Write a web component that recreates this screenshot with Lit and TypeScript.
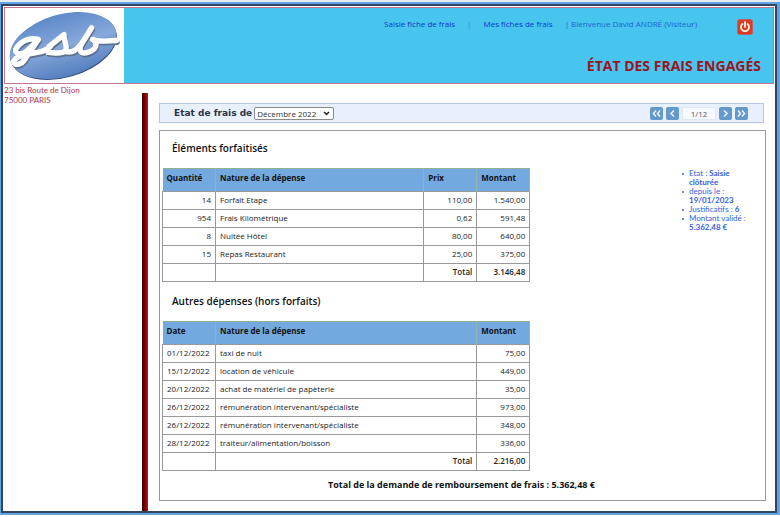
import { LitElement, html, css, svg } from "lit";
import { customElement, property, state } from "lit/decorators.js";

type Forfait = [string, string, string, string];
type HorsForfait = [string, string, string];

const FORFAITS: Forfait[] = [
  ["14", "Forfait Etape", "110,00", "1.540,00"],
  ["954", "Frais Kilométrique", "0,62", "591,48"],
  ["8", "Nuitée Hôtel", "80,00", "640,00"],
  ["15", "Repas Restaurant", "25,00", "375,00"],
];

const HORS_FORFAITS: HorsForfait[] = [
  ["01/12/2022", "taxi de nuit", "75,00"],
  ["15/12/2022", "location de véhicule", "449,00"],
  ["20/12/2022", "achat de matériel de papèterie", "35,00"],
  ["26/12/2022", "rémunération intervenant/spécialiste", "973,00"],
  ["26/12/2022", "rémunération intervenant/spécialiste", "348,00"],
  ["28/12/2022", "traiteur/alimentation/boisson", "336,00"],
];

@customElement("gsb-logo")
export class GsbLogo extends LitElement {
  static styles = css`
    :host { display: block; }
    .logo { display: block; width: 100%; height: 100%; }
  `;

  render() {
    const strokes = svg`
      <path d="M33 32 C24 29 14 34 10 42 C9 47 16 48 21 44 L33 32 L20 51 C16 58 8 59 8 54 C11 47 24 47 32 45 C38 44 42 42 45 39" />
      <path d="M44 39 L59 27 C58 33 64 39 60 44 C56 47 48 45 43 45 M60 44 C68 46 72 42 76 37" />
      <path d="M87 20 L77 36 C73 43 76 47 83 45 C92 42 94 36 88 32 C95 35 103 33 112 33" />
    `;
    return html`
      <svg class="logo" viewBox="0 0 119 76" role="img" aria-label="gsb">
        <defs>
          <linearGradient id="disc" x1="0" y1="0" x2="0" y2="1">
            <stop offset="0" stop-color="#5f8aca" />
            <stop offset="0.5" stop-color="#86a8da" />
            <stop offset="1" stop-color="#547fc0" />
          </linearGradient>
        </defs>
        <ellipse cx="58.5" cy="39" rx="55.5" ry="31.5" transform="rotate(-16 58.5 39)" fill="#314b78" />
        <ellipse cx="58" cy="38" rx="55.5" ry="31.5" transform="rotate(-16 58 38)" fill="url(#disc)" />
        <g fill="none" stroke="#5d718f" stroke-width="5" stroke-linecap="round" stroke-linejoin="round" transform="translate(1 2)">${strokes}</g>
        <g fill="none" stroke="#fff" stroke-width="5.5" stroke-linecap="round" stroke-linejoin="round">${strokes}</g>
      </svg>
    `;
  }
}

@customElement("pager-button")
export class PagerButton extends LitElement {
  @property() label = "";
  @property() kind = "next";

  static styles = css`
    .button {
      display: block;
      width: 13px;
      height: 13px;
      padding: 0;
      border: 0;
      border-radius: 2px;
      background: #6399cb;
      cursor: pointer;
    }
    .icon { display: block; width: 13px; height: 13px; }
  `;

  render() {
    const paths: Record<string, string> = {
      first: "M6 3.5 L3.5 6.5 L6 9.5 M10 3.5 L7.5 6.5 L10 9.5",
      previous: "M8 3.5 L5 6.5 L8 9.5",
      next: "M5 3.5 L8 6.5 L5 9.5",
      last: "M3 3.5 L5.5 6.5 L3 9.5 M7 3.5 L9.5 6.5 L7 9.5",
    };
    return html`
      <button class="button" type="button" aria-label=${this.label}>
        <svg class="icon" viewBox="0 0 13 13" aria-hidden="true">
          <path d=${paths[this.kind]} fill="none" stroke="#eef6ff" stroke-width="1.5" />
        </svg>
      </button>
    `;
  }
}

@customElement("app-root")
export class AppRoot extends LitElement {
  @state() private month = "Décembre 2022";

  static styles = css`
    :host {
      display: block;
      box-sizing: border-box;
      padding-top: 2px;
      background: #e9ecef;
      color: #111;
      font-family: "Open Sans", "Liberation Sans", sans-serif;
      font-size: 8px;
      line-height: 10px;
    }
    *, *::before, *::after { box-sizing: border-box; }
    .backdrop { padding: 2px 3px 2px 1px; background: #62a4e2; }
    .page {
      border: 2px solid #2f4468;
      border-bottom-color: #34475c;
      background: #fff;
      padding: 1px 1px 0;
    }
    .header {
      display: flex;
      height: 77px;
      border: 1px solid #c4788f;
      background: #48c5ee;
    }
    .brand { flex: none; width: 119px; background: #fff; }
    .banner {
      flex: 1;
      display: flex;
      flex-direction: column;
      align-items: flex-end;
      justify-content: space-between;
      padding: 11px 12px 7px;
    }
    .menu { display: flex; align-items: flex-start; gap: 12px; color: #1a5fd6; padding-right: 8px; }
    .link { color: #0a37d0; text-decoration: none; }
    .separator { color: #3d83c8; }
    .welcome { margin-right: 28px; color: #1c64cf; }
    .logout { display: block; width: 16px; height: 16px; padding: 0; border: 0; background: none; cursor: pointer; }
    .power { display: block; width: 16px; height: 16px; }
    .title { margin: 0; color: #9c1422; font-size: 14px; line-height: 20px; font-weight: 700; }
    .body { display: flex; }
    .side { flex: none; width: 138px; padding-top: 1px; }
    .address { margin: 0; color: #b83244; font-family: Lato, sans-serif; font-style: normal; line-height: 10px; }
    .bar {
      flex: none;
      width: 6px;
      margin-top: 9px;
      background: linear-gradient(to right, #3d0000, #7a0000 50%, #c01818);
    }
    .main { flex: 1; min-width: 0; padding: 19px 8px 10px 11px; }
    .toolbar {
      display: flex;
      align-items: center;
      justify-content: space-between;
      height: 20px;
      margin-right: 2px;
      padding: 0 15px 0 14px;
      border: 1px solid #b4c6e8;
      background: #e8f0fd;
    }
    .period { display: flex; align-items: center; gap: 2px; color: #2a3346; }
    .period-label { font-family: "DejaVu Sans", sans-serif; font-size: 9px; font-weight: 700; }
    .picker { position: relative; }
    .month {
      appearance: none;
      display: block;
      width: 80px;
      height: 13px;
      padding: 0 2px;
      border: 1px solid #8a8a8a;
      border-radius: 2px;
      background: #fff;
      color: #333;
      font: inherit;
      line-height: 11px;
    }
    .arrow { position: absolute; right: 4px; top: 4px; width: 7px; height: 5px; pointer-events: none; }
    .pager { display: flex; align-items: center; gap: 3px; }
    .position { width: 34px; height: 13px; border: 1px solid #dfe8f5; background: #f6faff; color: #555; line-height: 11px; text-align: center; }
    .sheet {
      display: flex;
      flex-wrap: wrap;
      justify-content: space-between;
      margin-top: 7px;
      padding: 10px 9px 8px 2px;
      border: 1px solid #999;
    }
    .tables { width: 62%; }
    .subtitle { margin: 0; padding-left: 10px; font-size: 10px; line-height: 14px; font-weight: 600; }
    .table {
      width: 100%;
      margin: 13px 0 12px;
      border-collapse: collapse;
      table-layout: fixed;
    }
    .table.last { margin-bottom: 0; }
    .narrow { width: 53px; }
    .table th { height: 23px; padding: 0 4px 4px; background: #74a9df; text-align: left; font-weight: 700; border-top: 1px solid #8eb18f; border-right: 1px solid #8fb5b0; }
    .table td { height: 18px; padding: 0 4px 2px; border: 1px solid #999; white-space: nowrap; color: #222; }
    .table .amount { text-align: right; }
    .table .sum { text-align: right; font-weight: 600; }
    .status {
      width: 67px;
      margin: 28px 0 0;
      padding: 0;
      list-style: none;
      color: #2f62e8;
      font-family: Lato, sans-serif;
      line-height: 9px;
    }
    .fact { position: relative; }
    .fact::before {
      content: "";
      position: absolute;
      left: -7px;
      top: 4px;
      width: 2px;
      height: 2px;
      border-radius: 50%;
      background: #2f62e8;
    }
    .grand { flex: 1 0 100%; margin: 7px 0 0; padding-left: 5px; text-align: center; font-size: 9px; line-height: 14px; font-weight: 700; }
    .footer { height: 4px; background: #fff; }
  `;

  private changeMonth(event: Event) {
    this.month = (event.target as HTMLSelectElement).value;
  }

  render() {
    return html`
      <div class="backdrop">
        <div class="page">
          <header class="header">
            <gsb-logo class="brand"></gsb-logo>
            <div class="banner">
              <nav class="menu">
                <a class="link" href="#saisie">Saisie fiche de frais</a>
                <span class="separator">|</span>
                <a class="link" href="#fiches">Mes fiches de frais</a>
                <span class="welcome">| Bienvenue David ANDRÉ (Visiteur)</span>
                <button class="logout" type="button" aria-label="Déconnexion">
                  <svg class="power" viewBox="0 0 16 16" aria-hidden="true">
                    <rect width="16" height="16" rx="3" fill="#b8606a" />
                    <rect x="1" y="1" width="14" height="14" rx="2" fill="#dc3a22" />
                    <path d="M5.5 5 A4 4 0 1 0 10.5 5 M8 3 V8" fill="none" stroke="#fff0e6" stroke-width="1.8" stroke-linecap="round" />
                  </svg>
                </button>
              </nav>
              <h1 class="title">ÉTAT DES FRAIS ENGAGÉS</h1>
            </div>
          </header>
          <div class="body">
            <div class="side">
              <address class="address">23 bis Route de Dijon<br />75000 PARIS</address>
            </div>
            <div class="bar"></div>
            <main class="main">
              <div class="toolbar">
                <div class="period">
                  <label class="period-label" for="month">Etat de frais de</label>
                  <div class="picker">
                    <select class="month" id="month" @change=${this.changeMonth}>
                      <option>${this.month}</option>
                    </select>
                    <svg class="arrow" viewBox="0 0 7 5" aria-hidden="true">
                      <path d="M1 1 L3.5 3.5 L6 1" fill="none" stroke="#222" stroke-width="1.5" />
                    </svg>
                  </div>
                </div>
                <div class="pager">
                  <pager-button kind="first" label="Première fiche"></pager-button>
                  <pager-button kind="previous" label="Fiche précédente"></pager-button>
                  <span class="position">1/12</span>
                  <pager-button kind="next" label="Fiche suivante"></pager-button>
                  <pager-button kind="last" label="Dernière fiche"></pager-button>
                </div>
              </div>
              <section class="sheet">
                <div class="tables">
                  <h2 class="subtitle">Éléments forfaitisés</h2>
                  <table class="table">
                    <colgroup><col class="narrow" /><col /><col class="narrow" /><col class="narrow" /></colgroup>
                    <thead>
                      <tr><th>Quantité</th><th>Nature de la dépense</th><th>Prix</th><th>Montant</th></tr>
                    </thead>
                    <tbody>
                      ${FORFAITS.map(([quantity, nature, price, total]) => html`
                        <tr>
                          <td class="amount">${quantity}</td>
                          <td>${nature}</td>
                          <td class="amount">${price}</td>
                          <td class="amount">${total}</td>
                        </tr>`)}
                      <tr><td></td><td></td><td class="sum">Total</td><td class="sum">3.146,48</td></tr>
                    </tbody>
                  </table>
                  <h2 class="subtitle">Autres dépenses (hors forfaits)</h2>
                  <table class="table last">
                    <colgroup><col class="narrow" /><col /><col class="narrow" /></colgroup>
                    <thead>
                      <tr><th>Date</th><th>Nature de la dépense</th><th>Montant</th></tr>
                    </thead>
                    <tbody>
                      ${HORS_FORFAITS.map(([date, nature, total]) => html`
                        <tr>
                          <td>${date}</td>
                          <td>${nature}</td>
                          <td class="amount">${total}</td>
                        </tr>`)}
                      <tr><td></td><td class="sum">Total</td><td class="sum">2.216,00</td></tr>
                    </tbody>
                  </table>
                </div>
                <ul class="status">
                  <li class="fact">Etat : <b>Saisie clôturée</b></li>
                  <li class="fact">depuis le : <b>19/01/2023</b></li>
                  <li class="fact">Justificatifs : <b>6</b></li>
                  <li class="fact">Montant validé : <b>5.362,48 €</b></li>
                </ul>
                <p class="grand">Total de la demande de remboursement de frais : 5.362,48 €</p>
              </section>
            </main>
          </div>
        </div>
      </div>
      <div class="footer"></div>
    `;
  }
}
